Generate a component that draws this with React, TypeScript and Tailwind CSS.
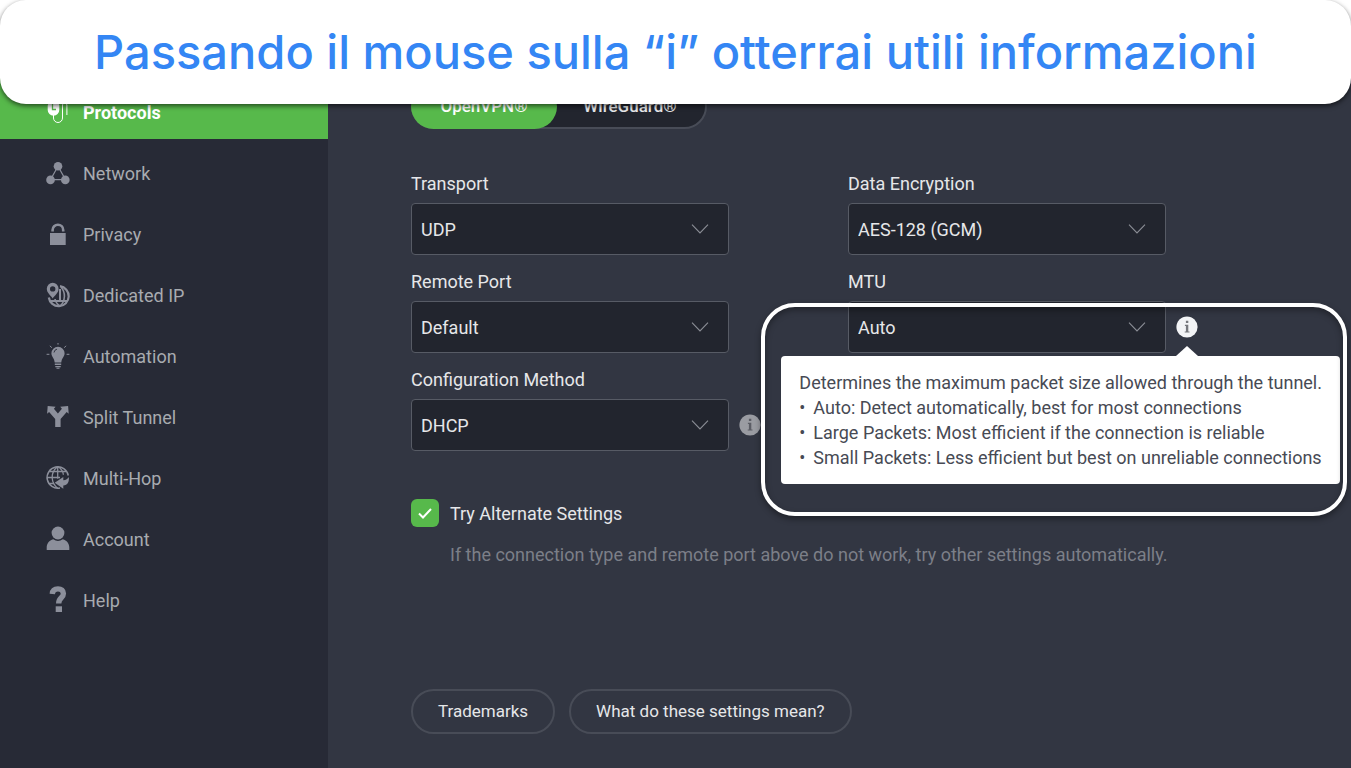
import { useState } from "react";
import type { ReactNode } from "react";

interface NavItem {
  name: string;
  icon: ReactNode;
}
interface SelectFieldProps {
  id: string;
  label: string;
  options: string[];
  children?: ReactNode;
}

const navItems: NavItem[] = [
  {
    name: "Protocols",
    icon: (
      <>
        <path
          d="M7.500 14v3a4.500 4.500 0 0 0 9 0V4a2.200 2.200 0 0 1 4.400 0v10"
          fill="none"
          stroke="currentColor"
          strokeWidth="1"
        />
        <path d="M1.700 4.500a2 2 0 0 1 2-2h7.600a2 2 0 0 1 2 2V9a5.800 5.800 0 0 1-11.600 0z" />
        <path d="M6.500 3v5.500h3.500" fill="none" stroke="#57b94b" strokeWidth="1.300" />
      </>
    ),
  },
  {
    name: "Network",
    icon: (
      <>
        <path
          d="M12 4.300 4.500 17.700h15z"
          fill="none"
          stroke="currentColor"
          strokeWidth="1.200"
        />
        <circle cx="12" cy="4.300" r="4.300" />
        <circle cx="4.500" cy="17.900" r="4.300" />
        <circle cx="19.300" cy="17.900" r="4.300" />
      </>
    ),
  },
  {
    name: "Privacy",
    icon: (
      <>
        <path d="M4 10h15.700v12H4z" />
        <path
          d="M6.600 8.500V7a5.300 5.300 0 0 1 10.600 0v1.500"
          fill="none"
          stroke="currentColor"
          strokeWidth="2.600"
        />
      </>
    ),
  },
  {
    name: "Dedicated IP",
    icon: (
      <>
        <g fill="none" stroke="currentColor" strokeWidth="1.600">
          <path
            d="M14 2.200A10 10 0 1 1 2.800 13.500"
            strokeWidth="2.200"
          />
          <path d="M15 3c2.500 3 3.600 6 3.400 9.500s-1 7-4.400 9.500c-3-2-4.600-4-5-7" />
          <path d="M14 5v12M4.500 17h17" strokeWidth="2" />
        </g>
        <path
          d="M6.700-1.200A6 6 0 0 0 .8 4.700c0 4.300 4 6.500 5.900 9.800 2-3.300 5.900-5.500 5.900-9.800a6 6 0 0 0-5.900-5.900zm0 3.400a2.700 2.700 0 1 1 0 5.400 2.700 2.700 0 0 1 0-5.400z"
          fillRule="evenodd"
        />
      </>
    ),
  },
  {
    name: "Automation",
    icon: (
      <>
        <path d="M12 1.700a6.600 6.600 0 0 0-6.600 6.600c0 3.300 2.900 4.700 3.300 9.200h6.600c.4-4.500 3.300-5.900 3.300-9.200A6.600 6.600 0 0 0 12 1.700z" />
        <path d="M8.800 18.500h6.400v1.500H8.800zM9.300 21h5.400v1.200H9.300zM10.500 22.800h3v1h-3z" />
        <path
          d="M12-2v1.600M4 .8l1.700 1.900M20 .8l-1.700 1.900M.6 9.300h2.800M20.600 9.300h2.800"
          stroke="currentColor"
          strokeWidth="1"
        />
        <path
          d="M8 7.500a4 4 0 0 1 3-3.400"
          fill="none"
          stroke="#272a36"
          strokeWidth=".9"
        />
      </>
    ),
  },
  {
    name: "Split Tunnel",
    icon: (
      <path d="M1.700 0 9.600.8 7.900 2.700l4 4.700 4-4.700L14.200.8 22.100 0l.6 7.700-2-1.700-6.100 7V21H9.200v-8L3.100 6l-2 1.700z" />
    ),
  },
  {
    name: "Multi-Hop",
    icon: (
      <>
        <g fill="none" stroke="currentColor" strokeWidth="1.300">
          <path d="M14 21A10.700 10.700 0 1 1 22.300 8.500" strokeWidth="1.500" />
          <path d="M11.700-.2v12M3 4.500h17.500M1 10.500h13M3 16.500h5" />
          <path d="M11.500-.2C7.500 3 6 7 6.200 11s2 7.500 5.500 10.200M12-.2c3.500 2.200 5.200 5 5.400 8" />
        </g>
        <path d="m8.700 15.700 8.600-5.700v3.200c2.800-.2 4.400-1.200 5.500-3.200.6 5-1.200 8-5.500 8.600v3.200z" />
      </>
    ),
  },
  {
    name: "Account",
    icon: (
      <>
        <circle cx="12" cy="5" r="6.400" />
        <path d="M.7 22v-2.500c0-4 2.500-7.300 6.500-8.300a8 8 0 0 0 9.600 0c4 1 6.500 4.300 6.500 8.300V22z" />
      </>
    ),
  },
  {
    name: "Help",
    icon: (
      <>
        <path
          d="M6.300 5C6.500 1.500 8.500-.1 12-.1c3.300 0 5.400 1.700 5.400 4.600 0 4.700-4.700 4-4.700 10"
          fill="none"
          stroke="currentColor"
          strokeWidth="5.400"
        />
        <path d="M9.700 17.300H16V23H9.700z" />
      </>
    ),
  },
];

const InfoIcon = ({ active = false }: { active?: boolean }) => (
  <svg
    viewBox="0 0 22 22"
    className={
      active ? "size-[22px] text-[#f3f4f6]" : "size-[22px] text-[#9a9ca2]"
    }
  >
    <circle cx="11" cy="11" r="10.600" fill="currentColor" />
    <path
      d="M9.900 4.700h2.400v2.200H9.900zM8.900 8.800h3.400v6.600h1.200v1.200H8.700v-1.200h1.200V10h-1z"
      fill={active ? "#77787d" : "#5b5d65"}
    />
  </svg>
);

const SelectField = ({ id, label, options, children }: SelectFieldProps) => (
  <div>
    <label htmlFor={id} className="block mb-[7px] leading-6">
      {label}
    </label>
    <div className="flex items-center gap-[10px]">
      <div className="grid w-[318px] items-center">
        <select
          id={id}
          className="col-start-1 row-start-1 h-[52px] w-full appearance-none rounded border border-[#575b65] bg-[#22252e] px-[9px] text-[#e6e7e9]"
        >
          {options.map((option) => (
            <option key={option}>{option}</option>
          ))}
        </select>
        <svg
          viewBox="0 0 18 10"
          className="pointer-events-none col-start-1 row-start-1 mr-5 h-[10px] w-[18px] justify-self-end"
        >
          <path
            d="m1 .7 8 8.300 8-8.300"
            fill="none"
            stroke="#8b8e96"
            strokeWidth="1.100"
          />
        </svg>
      </div>
      {children}
    </div>
  </div>
);

const MtuTooltip = () => (
  <div className="relative">
    <button type="button" aria-label="MTU info" className="block">
      <InfoIcon active />
    </button>
    <div
      role="tooltip"
      className="absolute -right-[142px] top-10 w-max rounded bg-white px-[18px] py-[14px] leading-[25px] text-[#474a54]"
    >
      <span className="absolute -top-[10px] right-[142px] h-[10px] w-[22px] bg-white [clip-path:polygon(50%_0,100%_100%,0_100%)]" />
      <p>Determines the maximum packet size allowed through the tunnel.</p>
      <ul>
        {[
          "Auto: Detect automatically, best for most connections",
          "Large Packets: Most efficient if the connection is reliable",
          "Small Packets: Less efficient but best on unreliable connections",
        ].map((line) => (
          <li key={line} className="flex">
            <span className="w-[14px]">•</span>
            {line}
          </li>
        ))}
      </ul>
    </div>
    <div className="pointer-events-none absolute -right-[149px] -top-[13px] h-[213px] w-[586px] rounded-[34px] border-4 border-white shadow-[0_3px_6px_rgba(0,0,0,0.4),inset_0_3px_6px_rgba(0,0,0,0.35)]" />
  </div>
);

const App = () => {
  const [page, setPage] = useState("Protocols");
  const [protocol, setProtocol] = useState("OpenVPN®");
  const [alternate, setAlternate] = useState(true);

  return (
    <div className="relative flex min-h-screen flex-col overflow-hidden bg-white pt-[52px] font-['Roboto',sans-serif] text-[18px] text-[#e6e7e9]">
      <header className="absolute inset-x-0 top-0 z-20 flex h-[104px] items-center justify-center rounded-[26px] bg-white shadow-[0_2px_5px_rgba(0,0,0,0.6)]">
        <h1 className="whitespace-nowrap font-['Inter',sans-serif] text-[47px] font-medium text-[#3486f4]">
          Passando il mouse sulla “i” otterrai utili informazioni
        </h1>
      </header>

      <div className="flex flex-1">
        <aside className="w-[328px] shrink-0 bg-[#272a36] pt-[35px]">
          <nav className="flex flex-col gap-[9px]">
            {navItems.map((item) => (
              <a
                key={item.name}
                href="#"
                onClick={() => setPage(item.name)}
                className={
                  page === item.name
                    ? "flex h-[52px] items-center gap-[13px] bg-[#57b94b] pl-[46px] font-bold text-white -mt-[35px] pt-[35px] box-content"
                    : "flex h-[52px] items-center gap-[13px] pl-[46px] text-[#a8abb0]"
                }
              >
                <svg
                  viewBox="0 0 24 24"
                  fill="currentColor"
                  className={
                    page === item.name
                      ? "size-6 overflow-visible text-white"
                      : "size-6 overflow-visible text-[#8c8f9b]"
                  }
                >
                  {item.icon}
                </svg>
                <span className="pb-[2px]">{item.name}</span>
              </a>
            ))}
          </nav>
        </aside>

        <main className="flex-1 bg-[#323642] pl-[83px] pr-[66px] pt-8">
          <div className="inline-flex h-[45px] rounded-full border-2 border-[#484c57] bg-[#22252e] text-[17px]">
            {["OpenVPN®", "WireGuard®"].map((name) => (
              <button
                key={name}
                type="button"
                onClick={() => setProtocol(name)}
                className={
                  protocol === name
                    ? "-m-[2px] w-[146px] rounded-full bg-[#57b94b] font-medium text-white"
                    : "w-[150px] font-medium"
                }
              >
                {name}
              </button>
            ))}
          </div>

          <div className="mt-[43px] grid grid-cols-2 gap-y-[15px]">
            <SelectField
              id="transport"
              label="Transport"
              options={["UDP", "TCP"]}
            />
            <SelectField
              id="encryption"
              label="Data Encryption"
              options={["AES-128 (GCM)", "AES-256 (GCM)"]}
            />
            <SelectField
              id="port"
              label="Remote Port"
              options={["Default", "53", "1194", "8080"]}
            />
            <SelectField
              id="mtu"
              label="MTU"
              options={["Auto", "Large Packets", "Small Packets"]}
            >
              <MtuTooltip />
            </SelectField>
            <SelectField
              id="config"
              label="Configuration Method"
              options={["DHCP", "Static"]}
            >
              <button type="button" aria-label="Configuration info">
                <InfoIcon />
              </button>
            </SelectField>
          </div>

          <div className="mt-12 flex items-center gap-[11px]">
            <div className="grid size-7 place-items-center">
              <input
                id="alternate"
                type="checkbox"
                checked={alternate}
                onChange={(e) => setAlternate(e.target.checked)}
                className="col-start-1 row-start-1 size-7 appearance-none rounded-md bg-[#22252e] checked:bg-[#57b94b]"
              />
              {alternate && (
                <svg
                  viewBox="0 0 14 11"
                  className="pointer-events-none col-start-1 row-start-1 h-[11px] w-[14px]"
                >
                  <path
                    d="m1 5.500 4 4L13 1"
                    fill="none"
                    stroke="white"
                    strokeWidth="2"
                  />
                </svg>
              )}
            </div>
            <label htmlFor="alternate">Try Alternate Settings</label>
          </div>
          <p className="mt-4 pl-[39px] leading-6 text-[#7c7f88]">
            If the connection type and remote port above do not work, try other
            settings automatically.
          </p>

          <div className="mt-[122px] flex gap-[14px] text-[17px]">
            <button
              type="button"
              className="h-[45px] rounded-full border-2 border-[#484c57] px-[25px]"
            >
              Trademarks
            </button>
            <button
              type="button"
              className="h-[45px] rounded-full border-2 border-[#484c57] px-[25px]"
            >
              What do these settings mean?
            </button>
          </div>
        </main>
      </div>
    </div>
  );
};

export default App;
